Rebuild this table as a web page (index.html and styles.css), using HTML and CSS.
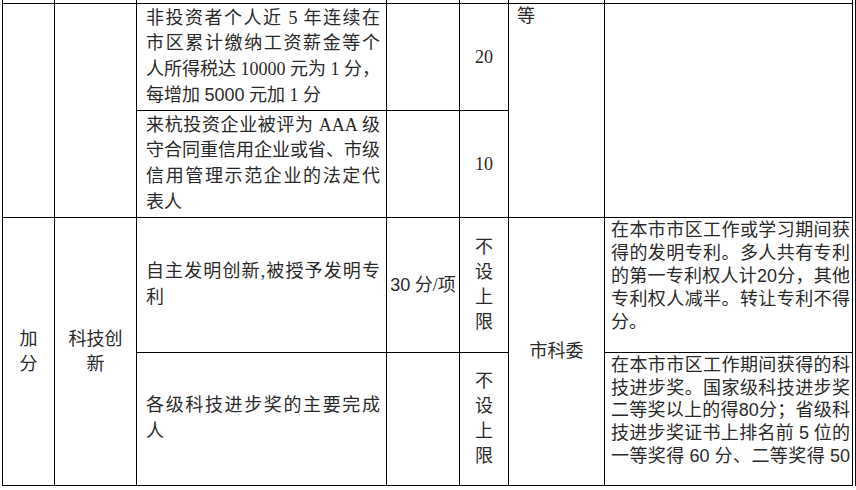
FILE: index.html
```html
<!DOCTYPE html>
<html lang="zh-CN">
<head>
<meta charset="utf-8">
<title>加分项目</title>
<link rel="stylesheet" href="styles.css">
</head>
<body>
<table class="sheet">
  <colgroup>
    <col class="c1"><col class="c2"><col class="c3"><col class="c4"><col class="c5"><col class="c6"><col class="c7">
  </colgroup>
  <tr class="sliver">
    <td></td><td></td><td></td><td></td><td></td><td></td><td></td>
  </tr>
  <tr class="r1">
    <td rowspan="2"></td>
    <td rowspan="2"></td>
    <td class="desc">
      <div class="jl">非投资者个人近 5 年连续在</div>
      <div class="jl">市区累计缴纳工资薪金等个</div>
      <div class="jl">人所得税达 10000 元为 1 分，</div>
      <div>每增加 <span class="s">5000</span> 元加 1 分</div>
    </td>
    <td></td>
    <td class="center">20</td>
    <td rowspan="2" class="top">等</td>
    <td rowspan="2"></td>
  </tr>
  <tr class="r2">
    <td class="desc">
      <div class="jl">来杭投资企业被评为 AAA 级</div>
      <div class="jl">守合同重信用企业或省、市级</div>
      <div class="jl">信用管理示范企业的法定代</div>
      <div>表人</div>
    </td>
    <td></td>
    <td class="center">10</td>
  </tr>
  <tr class="r3">
    <td rowspan="2" class="center">加<br>分</td>
    <td rowspan="2" class="center">科技创<br>新</td>
    <td class="desc">
      <div class="jl">自主发明创新,被授予发明专</div>
      <div>利</div>
    </td>
    <td class="center"><span class="s">30</span> 分/项</td>
    <td class="center">不<br>设<br>上<br>限</td>
    <td rowspan="2" class="center">市科委</td>
    <td class="note">
      <div class="jl">在本市市区工作或学习期间获</div>
      <div class="jl">得的发明专利。多人共有专利</div>
      <div class="jl">的第一专利权人计<span class="s">20</span>分，其他</div>
      <div class="jl">专利权人减半。转让专利不得</div>
      <div>分。</div>
    </td>
  </tr>
  <tr class="r4">
    <td class="desc">
      <div class="jl">各级科技进步奖的主要完成</div>
      <div>人</div>
    </td>
    <td></td>
    <td class="center">不<br>设<br>上<br>限</td>
    <td class="note">
      <div class="jl">在本市市区工作期间获得的科</div>
      <div class="jl">技进步奖。国家级科技进步奖</div>
      <div class="jl">二等奖以上的得<span class="s">80</span>分；省级科</div>
      <div class="jl">技进步奖证书上排名前 <span class="s">5</span> 位的</div>
      <div class="jl">一等奖得 <span class="s">60</span> 分、二等奖得 <span class="s">50</span></div>
    </td>
  </tr>
</table>
</body>
</html>
```

FILE: styles.css
```css
html, body {
  margin: 0;
  padding: 0;
  background: #fff;
}

body {
  font-family: "Liberation Serif", "Noto Sans CJK SC", serif;
  font-size: 18px;
  color: #2a2a2a;
  overflow: hidden;
}

.sheet {
  border-collapse: collapse;
  table-layout: fixed;
  width: 850px;
  margin-left: 2px;
  box-shadow: 2px 0 0 #fff, 3px 0 0 #111;
}

.c1 { width: 52px; }
.c2 { width: 82px; }
.c3 { width: 250px; }
.c4 { width: 73px; }
.c5 { width: 49px; }
.c6 { width: 96px; }
.c7 { width: 248px; }

.sheet td {
  border: 1px solid #000;
  padding: 0;
  vertical-align: middle;
  line-height: 25px;
  overflow: hidden;
}

.sliver td {
  border-top: none;
  height: 3px;
}

.r1 { height: 107px; }
.r2 { height: 107px; }
.r3 { height: 135px; }
.r4 { height: 133px; }

.desc {
  padding: 0 6px 0 9px !important;
  line-height: 25.6px !important;
}

.note {
  padding: 1px 2px 0 6px !important;
  vertical-align: top !important;
  line-height: 23px !important;
}

.r4 .note {
  line-height: 22.7px !important;
}

.jl {
  text-align: justify;
  text-align-last: justify;
  white-space: nowrap;
}

.center {
  text-align: center;
}

.top {
  vertical-align: top !important;
  padding: 0 0 0 8px !important;
}

.s {
  font-family: "Liberation Sans", "Noto Sans CJK SC", sans-serif;
}
```
